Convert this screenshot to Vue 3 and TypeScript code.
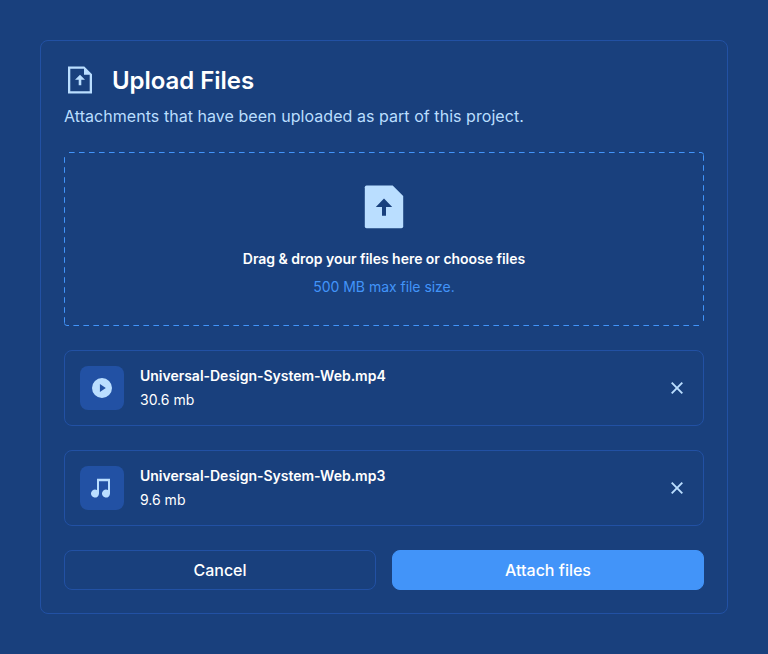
<script setup lang="ts">
interface Attachment {
  name: string
  size: string
  kind: 'video' | 'audio'
}

const attachments: Attachment[] = [
  { name: 'Universal-Design-System-Web.mp4', size: '30.6 mb', kind: 'video' },
  { name: 'Universal-Design-System-Web.mp3', size: '9.6 mb', kind: 'audio' },
]
</script>

<template>
  <main class="page">
    <section class="card">
      <header class="header">
        <div class="title-row">
          <svg class="title-icon" viewBox="0 0 32 32" aria-hidden="true">
            <path fill-rule="evenodd" d="M4 2.5H20.3L28 10.2V29.5H4V2.5ZM6.3 4.8V27.2H25.7V10.8H20V4.8H6.3Z" />
            <path d="M16 10.7L21 15.7H17.3V21.3H14.7V15.7H11L16 10.7Z" />
          </svg>
          <h1 class="title">Upload Files</h1>
        </div>
        <p class="subtitle">Attachments that have been uploaded as part of this project.</p>
      </header>

      <div class="dropzone">
        <svg class="dash-frame" viewBox="0 0 640 174" aria-hidden="true">
          <path d="M5 0.5H637Q639.5 0.5 639.5 3" />
          <path d="M639.5 168.8V3" />
          <path d="M635 173.5H3Q0.5 173.5 0.5 171" />
          <path d="M0.5 5.2V171" />
        </svg>
        <svg class="drop-icon" viewBox="0 0 40 44" aria-hidden="true">
          <path class="sheet" d="M2.5 0.5H28.7L39.2 11V41.5Q39.2 43.3 37.4 43.3H2.5Q0.8 43.3 0.8 41.5V2.3Q0.8 0.5 2.5 0.5Z" />
          <path class="arrow" d="M20 13.6L28.2 22H22V30.8H18V22H11.8L20 13.6Z" />
        </svg>
        <p class="drop-title">Drag &amp; drop your files here or choose files</p>
        <p class="drop-hint">500 MB max file size.</p>
      </div>

      <article v-for="file in attachments" :key="file.name" class="file">
        <div class="thumb">
          <svg v-if="file.kind === 'video'" class="thumb-icon" viewBox="0 0 24 24" aria-hidden="true">
            <path fill-rule="evenodd" d="M12 2a10 10 0 1 0 0 20a10 10 0 0 0 0-20ZM9.9 7.9L15.8 12L9.9 16.1Z" />
          </svg>
          <svg v-else class="thumb-icon" viewBox="0 0 24 24" aria-hidden="true">
            <path d="M7 2.8H20V17.6A4 4 0 1 1 18 14.1V5.2H9V17.6A4 4 0 1 1 7 14.1Z" />
          </svg>
        </div>
        <div class="file-info">
          <p class="file-name">{{ file.name }}</p>
          <p class="file-size">{{ file.size }}</p>
        </div>
        <button class="remove" type="button" aria-label="Remove file">
          <svg viewBox="0 0 12 12" aria-hidden="true"><path d="M0.7 0.7L11.3 11.3M11.3 0.7L0.7 11.3" /></svg>
        </button>
      </article>

      <footer class="actions">
        <button class="btn cancel" type="button">Cancel</button>
        <button class="btn attach" type="button">Attach files</button>
      </footer>
    </section>
  </main>
</template>

<style>
body {
  background: #19407d;
}
</style>

<style scoped>
.page {
  box-sizing: border-box;
  width: 768px;
  min-height: 654px;
  padding: 40px;
  background: #19407d;
  font-family: Inter, sans-serif;
  color: #fff;
}
.card {
  box-sizing: border-box;
  display: flex;
  flex-direction: column;
  gap: 24px;
  height: 574px;
  padding: 23px;
  border: 1px solid #2251a4;
  border-radius: 8px;
}
.header {
  height: 64px;
}
.title-row {
  display: flex;
  align-items: center;
  gap: 16px;
  height: 32px;
}
.title-icon {
  width: 32px;
  height: 32px;
  fill: #badeff;
}
.title {
  margin: 0;
  padding-top: 2px;
  font-size: 24px;
  line-height: 32px;
  font-weight: 600;
  letter-spacing: -0.04px;
}
.subtitle {
  margin: 8px 0 0;
  color: #badeff;
  font-size: 16px;
  line-height: 24px;
  letter-spacing: 0.05px;
}
.dropzone {
  position: relative;
  box-sizing: border-box;
  display: flex;
  flex-direction: column;
  align-items: center;
  height: 174px;
  padding-top: 33px;
}
.dash-frame {
  position: absolute;
  inset: 0;
  width: 640px;
  height: 174px;
}
.dash-frame path {
  fill: none;
  stroke: #4294f9;
  stroke-width: 1;
  stroke-dasharray: 5.6 4.4;
}
.drop-icon {
  width: 40px;
  height: 44px;
}
.sheet {
  fill: #badeff;
}
.arrow {
  fill: #19407d;
}
.drop-title {
  margin: 18px 0 0;
  font-size: 14px;
  line-height: 24px;
  font-weight: 600;
  letter-spacing: -0.03px;
}
.drop-hint {
  margin: 4px 0 0;
  color: #4294f9;
  font-size: 14px;
  line-height: 24px;
  letter-spacing: -0.03px;
}
.file {
  box-sizing: border-box;
  display: flex;
  align-items: center;
  gap: 16px;
  height: 76px;
  padding: 0 15px;
  border: 1px solid #2251a4;
  border-radius: 8px;
}
.thumb {
  display: flex;
  align-items: center;
  justify-content: center;
  width: 44px;
  height: 44px;
  border-radius: 8px;
  background: #2251a4;
}
.thumb-icon {
  width: 24px;
  height: 24px;
  fill: #badeff;
}
.file-info {
  flex: 1;
}
.file-name,
.file-size {
  margin: 0;
  font-size: 14px;
  line-height: 24px;
}
.file-name {
  font-weight: 600;
  letter-spacing: -0.02px;
}
.remove {
  display: flex;
  align-items: center;
  justify-content: center;
  width: 22px;
  height: 24px;
  padding: 0;
  border: 0;
  background: none;
}
.remove svg {
  width: 12px;
  height: 12px;
}
.remove path {
  fill: none;
  stroke: #badeff;
  stroke-width: 1.9;
}
.actions {
  display: grid;
  grid-template-columns: 1fr 1fr;
  gap: 16px;
}
.btn {
  box-sizing: border-box;
  height: 40px;
  padding: 0;
  border: 1px solid #2251a4;
  border-radius: 8px;
  background: none;
  color: #fff;
  font-family: inherit;
  font-size: 16px;
  line-height: 24px;
  font-weight: 500;
}
.attach {
  border-color: #4294f9;
  background: #4294f9;
}
</style>
